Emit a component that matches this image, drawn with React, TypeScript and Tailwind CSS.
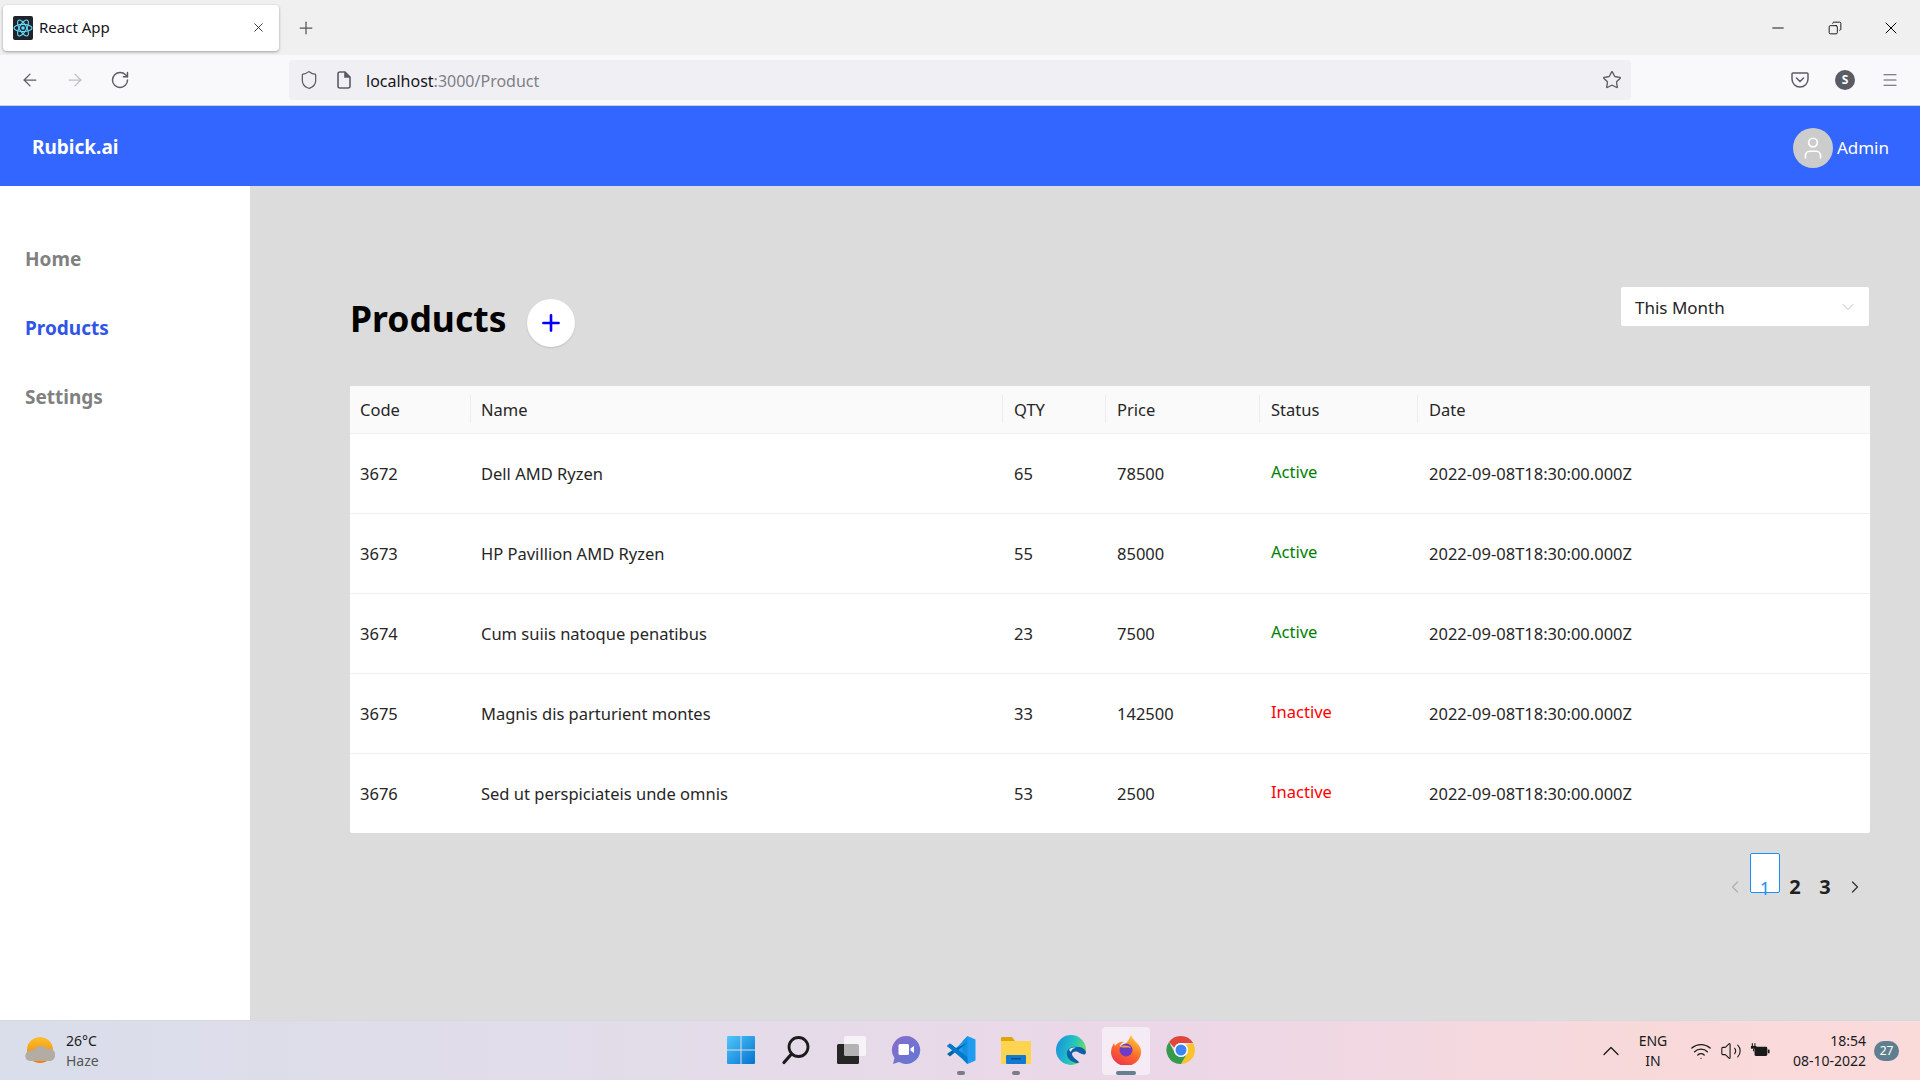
import { ArrowLeft, ArrowRight, ChevronDown, ChevronLeft, ChevronRight, ChevronUp, Copy, Menu, Minus, Plus, RotateCw, Shield, Star, User, Volume2, Wifi, X } from "lucide-react";

const FONT = "font-['Noto_Sans',sans-serif]";

const PRODUCTS = [
  { code: 3672, name: "Dell AMD Ryzen", qty: 65, price: 78500, active: true },
  { code: 3673, name: "HP Pavillion AMD Ryzen", qty: 55, price: 85000, active: true },
  { code: 3674, name: "Cum suiis natoque penatibus", qty: 23, price: 7500, active: true },
  { code: 3675, name: "Magnis dis parturient montes", qty: 33, price: 142500, active: false },
  { code: 3676, name: "Sed ut perspiciateis unde omnis", qty: 53, price: 2500, active: false },
];

const COLUMNS = [
  { label: "Code", width: "w-[121px]" },
  { label: "Name", width: "w-[532px]" },
  { label: "QTY", width: "w-[103px]" },
  { label: "Price", width: "w-[154px]" },
  { label: "Status", width: "w-[158px]" },
  { label: "Date", width: "" },
];

function ReactFavicon() {
  return (
    <svg viewBox="0 0 20 24" className="w-[20px] h-[24px]">
      <rect width="20" height="24" rx="2" fill="#20232a" />
      <g fill="none" stroke="#61dafb" strokeWidth="1.1">
        <ellipse cx="10" cy="12" rx="9" ry="3.6" />
        <ellipse cx="10" cy="12" rx="9" ry="3.6" transform="rotate(60 10 12)" />
        <ellipse cx="10" cy="12" rx="9" ry="3.6" transform="rotate(120 10 12)" />
      </g>
      <circle cx="10" cy="12" r="1.8" fill="#61dafb" />
    </svg>
  );
}

function PageIcon() {
  return (
    <svg viewBox="0 0 14 18" className="w-[14px] h-[18px]" fill="none" stroke="#5b5b66" strokeWidth="1.6">
      <path d="M3 1h5l5 5v9a2 2 0 0 1-2 2H3a2 2 0 0 1-2-2V3a2 2 0 0 1 2-2z" />
      <path d="M8 1v5h5" fill="#5b5b66" />
    </svg>
  );
}

function PocketIcon() {
  return (
    <svg viewBox="0 0 18 16" className="w-[18px] h-[16px]" fill="none" stroke="#5b5b66" strokeWidth="1.5">
      <path d="M2 1h14a1 1 0 0 1 1 1v5a8 8 0 0 1-16 0V2a1 1 0 0 1 1-1z" />
      <path d="M5.5 6 9 9.5 12.500 6" strokeLinecap="round" />
    </svg>
  );
}

function BrowserChrome() {
  return (
    <>
      <div className="h-[55px] bg-[#f0f0f0] flex items-center">
        <div className="ml-[3px] w-[276px] h-[46px] bg-white rounded-[4px] shadow-[0_1px_3px_rgba(0,0,0,0.35)] flex items-center pl-[10px] pr-[13px]">
          <ReactFavicon />
          <span className="ml-[6px] flex-1 text-[15px] text-[#15141a]">React App</span>
          <X className="w-[15px] h-[15px] text-[#333]" strokeWidth={1.5} />
        </div>
        <Plus className="ml-[17px] w-[20px] h-[20px] text-[#555]" strokeWidth={1.5} />
        <div className="ml-auto flex items-center text-black">
          <div className="w-[57px] flex justify-center"><Minus className="w-[18px] h-[18px]" strokeWidth={1.2} /></div>
          <div className="w-[57px] flex justify-center"><Copy className="w-[14px] h-[14px] scale-x-[-1]" strokeWidth={1.5} /></div>
          <div className="w-[56px] flex justify-center mr-[1px]"><X className="w-[20px] h-[20px]" strokeWidth={1.2} /></div>
        </div>
      </div>
      <div className="h-[51px] bg-[#f9f9fb] border-b border-[#cfcfd8] flex items-center text-[#5b5b66]">
        <div className="w-[289px] flex items-center pl-[20px] gap-[25px]">
          <ArrowLeft className="w-[20px] h-[20px]" strokeWidth={1.5} />
          <ArrowRight className="w-[20px] h-[20px] text-[#bdbdc2]" strokeWidth={1.5} />
          <RotateCw className="w-[20px] h-[20px]" strokeWidth={1.7} />
        </div>
        <div className="w-[1342px] h-[40px] bg-[#f0f0f4] rounded-[4px] flex items-center pl-[10px] pr-[9px]">
          <Shield className="w-[20px] h-[20px]" strokeWidth={1.5} />
          <div className="ml-[18px] flex"><PageIcon /></div>
          <span className="ml-[15px] flex-1 text-[16px] text-[#15141a] pt-[2px]">
            localhost<span className="text-[#7f7f87]">:3000/Product</span>
          </span>
          <Star className="w-[20px] h-[20px]" strokeWidth={1.6} />
        </div>
        <div className="flex-1 flex items-center pl-[160px] gap-[26px]">
          <PocketIcon />
          <div className="w-[20px] h-[20px] rounded-full bg-[#5b5b66] text-white text-[12px] font-bold flex items-center justify-center">S</div>
          <Menu className="w-[18px] h-[18px]" strokeWidth={1.5} />
        </div>
      </div>
    </>
  );
}

function AppHeader() {
  return (
    <header className="h-[80px] bg-[#3366ff] text-white flex items-center justify-between pl-[32px] pr-[31px] pt-[3px]">
      <span className="text-[19px] font-bold">Rubick.ai</span>
      <div className="flex items-center gap-[4px]">
        <div className="w-[40px] h-[40px] rounded-full bg-[#cccccc] flex items-center justify-center">
          <User className="w-[26px] h-[26px] text-white" strokeWidth={1.6} />
        </div>
        <span className="text-[17px]">Admin</span>
      </div>
    </header>
  );
}

function Sidebar() {
  return (
    <aside className="w-[250px] bg-white pt-[60px] pl-[25px] flex flex-col gap-[43px] text-[19px] font-bold text-[#808080]">
      <span className="leading-[26px]">Home</span>
      <span className="leading-[26px] text-[#2f55e8]">Products</span>
      <span className="leading-[26px]">Settings</span>
    </aside>
  );
}

function ProductTable() {
  return (
    <table className="w-[1520px] table-fixed bg-white rounded-[2px] text-[16.500px] text-[#262626]">
      <thead className="bg-[#fafafa]">
        <tr className="h-[47px] border-b border-[#f0f0f0]">
          {COLUMNS.map((col, i) => (
            <th key={col.label} className={`${col.width} font-normal text-left p-0`}>
              <div className={`h-[28px] leading-[30px] pl-[10px] ${i < 5 ? "border-r border-[#ececec]" : ""} ${i > 1 ? "pl-[11px]" : ""}`}>
                {col.label}
              </div>
            </th>
          ))}
        </tr>
      </thead>
      <tbody>
        {PRODUCTS.map((p) => (
          <tr key={p.code} className="h-[80px] border-b border-[#f0f0f0] last:border-b-0">
            <td className="pl-[10px] pt-[2px]">{p.code}</td>
            <td className="pl-[10px] pt-[2px]">{p.name}</td>
            <td className="pl-[11px] pt-[2px]">{p.qty}</td>
            <td className="pl-[11px] pt-[2px]">{p.price}</td>
            <td className="pl-[11px] pt-[2px]">
              <span className={`inline-block pb-[3px] ${p.active ? "text-[#008000]" : "text-[#ff0000]"}`}>
                {p.active ? "Active" : "Inactive"}
              </span>
            </td>
            <td className="pl-[11px] pt-[2px]">2022-09-08T18:30:00.000Z</td>
          </tr>
        ))}
      </tbody>
    </table>
  );
}

function Pagination() {
  return (
    <div className="mt-[20px] w-[1520px] flex items-end justify-end pr-[5px] text-[20px] font-bold text-[#1f1f1f] h-[40px]">
      <ChevronLeft className="w-[20px] h-[20px] -mb-[4px] text-[#b0b0b0]" strokeWidth={1.5} />
      <div className="ml-[5px] w-[30px] h-[40px] bg-white border border-[#1890ff] rounded-[2px] flex items-end justify-center text-[#1890ff] font-normal text-[18px] leading-[18px]">
        <span className="-mb-[5px]">1</span>
      </div>
      <span className="ml-[5px] w-[20px] text-center leading-[22px] -mb-[5px]">2</span>
      <span className="ml-[10px] w-[20px] text-center leading-[22px] -mb-[5px]">3</span>
      <ChevronRight className="ml-[10px] w-[20px] h-[20px] -mb-[4px] text-[#333]" strokeWidth={1.5} />
    </div>
  );
}

function WeatherIcon() {
  return (
    <svg viewBox="0 0 30 28" className="w-[30px] h-[28px]">
      <defs>
        <linearGradient id="sun" x1="0" y1="0" x2="0" y2="1">
          <stop offset="0" stopColor="#fbc02d" />
          <stop offset="1" stopColor="#f57c00" />
        </linearGradient>
      </defs>
      <circle cx="15" cy="13" r="13" fill="url(#sun)" />
      <path d="M5 24a5 5 0 0 1-1-9.800 6 6 0 0 1 5-1.200 7.500 7.500 0 0 1 13-1 6 6 0 0 1 4 12z" fill="#b3aca2" />
    </svg>
  );
}

function WindowsIcon() {
  return (
    <svg viewBox="0 0 30 30" className="w-[30px] h-[30px]">
      <defs>
        <linearGradient id="win" x1="0" y1="0" x2="1" y2="1">
          <stop offset="0" stopColor="#4fc8fb" />
          <stop offset="1" stopColor="#0472cf" />
        </linearGradient>
      </defs>
      <path d="M1 2a1 1 0 0 1 1-1h12.500v13.500H1zM15.500 1H28a1 1 0 0 1 1 1v12.500H15.500zM1 15.500h13.500V29H2a1 1 0 0 1-1-1zM15.500 15.500H29V28a1 1 0 0 1-1 1H15.500z" fill="url(#win)" />
    </svg>
  );
}

function SearchIcon() {
  return (
    <svg viewBox="0 0 30 30" className="w-[30px] h-[30px]" fill="none" stroke="#1c1c1c">
      <circle cx="17.500" cy="12" r="9.500" strokeWidth="2.800" />
      <path d="M10.500 19 3 27.500" strokeWidth="3.200" strokeLinecap="round" />
    </svg>
  );
}

function TaskViewIcon() {
  return (
    <svg viewBox="0 0 30 30" className="w-[30px] h-[30px]">
      <rect x="1" y="9" width="22" height="20" rx="1.500" fill="#262626" />
      <rect x="8" y="1" width="22" height="20" rx="1.500" fill="#ffffff" fillOpacity="0.65" />
    </svg>
  );
}

function ChatIcon() {
  return (
    <svg viewBox="0 0 30 30" className="w-[30px] h-[30px]">
      <defs>
        <linearGradient id="chat" x1="0" y1="0" x2="1" y2="1">
          <stop offset="0" stopColor="#8a6bc9" />
          <stop offset="1" stopColor="#5f79d6" />
        </linearGradient>
      </defs>
      <path d="M15 1a14 14 0 1 1-7 26l-6 2 1.500-6A14 14 0 0 1 15 1z" fill="url(#chat)" />
      <rect x="7.500" y="9" width="10.500" height="11" rx="1.500" fill="#fff" />
      <path d="M19.500 13.500 23 11v7l-3.500-2.500z" fill="#fff" />
    </svg>
  );
}

function VsCodeIcon() {
  return (
    <svg viewBox="0 0 30 30" className="w-[30px] h-[30px]">
      <path d="M21.500 1 29.500 4.500V25.500L21.500 29 8 15.500z" fill="#1f9cf0" />
      <path d="M21.500 1 21.500 29 16.500 24 16.500 6z" fill="#0a7cc4" fillOpacity="0.4" />
      <path d="M21.500 8 10 16.500 4 21.500 1 19 6.500 15 1 11 4 8.500 10 13z" fill="#0065a9" />
      <path d="M21.500 22 4 8.500 1 11 16.500 24 21.500 29z" fill="#007acc" />
    </svg>
  );
}

function FolderIcon() {
  return (
    <svg viewBox="0 0 30 28" className="w-[30px] h-[28px]">
      <path d="M0 2a1 1 0 0 1 1-1h10l3 4H0z" fill="#dda600" />
      <rect y="5" width="30" height="23" fill="#fdd44f" />
      <rect x="5" y="19" width="20" height="9" rx="1" fill="#0f7ad0" />
      <rect x="10" y="22" width="10" height="1.500" fill="#0b4e8c" />
    </svg>
  );
}

function EdgeIcon() {
  return (
    <svg viewBox="0 0 30 30" className="w-[30px] h-[30px]">
      <defs>
        <linearGradient id="edge" x1="0" y1="0.200" x2="1" y2="0.500">
          <stop offset="0" stopColor="#1a8fe0" />
          <stop offset="0.550" stopColor="#22c3c0" />
          <stop offset="1" stopColor="#6fdc60" />
        </linearGradient>
      </defs>
      <circle cx="15" cy="15" r="15" fill="url(#edge)" />
      <path d="M30 17c-1-3-4-5-8-5-5-1-10 1-11 5-1 5 3 10 10 11 5-1 7-5 9-11z" fill="#0c5fa8" />
      <path d="M30 19c-2 1-5 0-8-2-3-1-6 0-6 2 0 3 4 5 8 9 3-1 5-4 6-9z" fill="#ead9e8" />
      <path d="M13 15c1-2 4-3 7-2-3 0-5 2-5 4z" fill="#dff3f6" />
    </svg>
  );
}

function FirefoxIcon() {
  return (
    <svg viewBox="0 0 30 30" className="w-[30px] h-[30px]">
      <defs>
        <linearGradient id="ff" x1="0.700" y1="0" x2="0.200" y2="1">
          <stop offset="0" stopColor="#ffc83a" />
          <stop offset="0.500" stopColor="#ff6a2b" />
          <stop offset="1" stopColor="#e8304f" />
        </linearGradient>
      </defs>
      <path d="M20 0c1 3 3 5 6 8 3 3 4 6 4 8a15 14 0 1 1-29-4l2-4 1 3c2-3 6-5 9-4-3 1-4 3-4 5 5-1 8-5 11-12z" fill="url(#ff)" />
      <circle cx="15" cy="15" r="6.500" fill="#6c3cc4" />
      <path d="M9 12c3-2 9-2 11 1-3-1-7 0-11-1z" fill="#f9a03a" />
    </svg>
  );
}

function ChromeIcon() {
  return (
    <svg viewBox="0 0 30 30" className="w-[30px] h-[30px]">
      <path d="M15 1a14 14 0 0 1 12.100 7H15a7 7 0 0 0-6.600 4.700L3 7A14 14 0 0 1 15 1z" fill="#e0463a" />
      <path d="M27.100 8A14 14 0 0 1 15 29l6-10.500A7 7 0 0 0 20 10z" fill="#f9c32b" />
      <path d="M3 7a14 14 0 0 0 12 22l6-10.500A7 7 0 0 1 8.400 17z" fill="#359a4d" />
      <circle cx="15" cy="15" r="7" fill="#fff" />
      <circle cx="15" cy="15" r="5.500" fill="#3d85f3" />
    </svg>
  );
}

function BatteryIcon() {
  return (
    <svg viewBox="0 0 22 16" className="w-[20px] h-[15px]" fill="#1a1a1a">
      <rect x="5" y="4" width="14" height="10" rx="1.500" />
      <rect x="19.500" y="7" width="2" height="4" />
      <rect x="1" y="3" width="6" height="3" />
      <rect x="2" y="0" width="1.200" height="3" />
      <rect x="4.800" y="0" width="1.200" height="3" />
      <rect x="3.400" y="6" width="1.200" height="3" />
    </svg>
  );
}

const TASKBAR_APPS = [
  { key: "start", icon: <WindowsIcon /> },
  { key: "search", icon: <SearchIcon /> },
  { key: "tasks", icon: <TaskViewIcon /> },
  { key: "chat", icon: <ChatIcon /> },
  { key: "code", icon: <VsCodeIcon />, dot: true },
  { key: "files", icon: <FolderIcon />, dot: true },
  { key: "edge", icon: <EdgeIcon /> },
  { key: "firefox", icon: <FirefoxIcon />, active: true },
  { key: "chrome", icon: <ChromeIcon /> },
];

function Taskbar() {
  return (
    <footer className="h-[60px] flex items-center border-t border-[#d8d8e4] bg-[linear-gradient(90deg,#d9deea_0%,#e3dce9_35%,#ebd7e8_60%,#f8d9da_85%,#fbdada_100%)] text-[#1a1a1a]">
      <div className="w-[713px] flex items-center pl-[25px]">
        <WeatherIcon />
        <div className="ml-[11px] text-[14px] leading-[20px]">
          <div>26°C</div>
          <div className="text-[#555]">Haze</div>
        </div>
      </div>
      <div className="flex items-center">
        {TASKBAR_APPS.map((app) => (
          <div key={app.key} className="relative w-[55px] h-[48px] flex items-center justify-center">
            {app.active && <div className="absolute w-[48px] h-[48px] bg-white/50 rounded-[4px]" />}
            <div className="relative mb-[2px]">{app.icon}</div>
            {app.dot && <div className="absolute bottom-[0px] w-[8px] h-[4px] rounded-full bg-[#7b7b85]" />}
            {app.active && <div className="absolute bottom-[0px] w-[20px] h-[4px] rounded-full bg-[#64808f]" />}
          </div>
        ))}
      </div>
      <div className="flex-1 flex items-center">
        <ChevronUp className="ml-[389px] w-[28px] h-[28px]" strokeWidth={1.1} />
        <div className="ml-[4px] w-[48px] text-center text-[14px] leading-[20px]">
          <div>ENG</div>
          <div>IN</div>
        </div>
        <Wifi className="ml-[13px] w-[22px] h-[22px]" strokeWidth={1.4} />
        <Volume2 className="ml-[8px] w-[22px] h-[22px]" strokeWidth={1.2} />
        <div className="ml-[8px] flex"><BatteryIcon /></div>
        <div className="ml-[11px] w-[85px] text-right text-[14px] leading-[20px]">
          <div>18:54</div>
          <div>08-10-2022</div>
        </div>
        <div className="ml-[8px] w-[25px] h-[20px] rounded-full bg-[#5f7f90] text-white text-[12px] flex items-center justify-center">27</div>
      </div>
    </footer>
  );
}

export default function App() {
  return (
    <div className={`h-screen overflow-hidden flex flex-col ${FONT}`}>
      <BrowserChrome />
      <AppHeader />
      <div className="flex-1 flex min-h-0">
        <Sidebar />
        <main className="flex-1 bg-[#dcdcdc] pl-[100px] pt-[102px]">
          <div className="w-[1520px] h-[98px] flex items-start justify-between">
            <div className="flex items-start">
              <h1 className="text-[35.500px] leading-[60px] font-bold text-black">Products</h1>
              <button className="ml-[21px] mt-[11px] w-[48px] h-[48px] rounded-full bg-white shadow-[0_1px_2px_rgba(0,0,0,0.12)] flex items-center justify-center">
                <Plus className="w-[26px] h-[26px] text-[#0000ff]" strokeWidth={2.4} />
              </button>
            </div>
            <div className="-mt-[1px] mr-[1px] w-[248px] h-[39px] bg-white rounded-[2px] flex items-center justify-between pl-[14px] pr-[11px] pt-[2px] text-[17px] text-[#262626]">
              <span>This Month</span>
              <ChevronDown className="-mt-[2px] w-[20px] h-[20px] text-[#bfbfbf]" strokeWidth={1.2} />
            </div>
          </div>
          <ProductTable />
          <Pagination />
        </main>
      </div>
      <Taskbar />
    </div>
  );
}
